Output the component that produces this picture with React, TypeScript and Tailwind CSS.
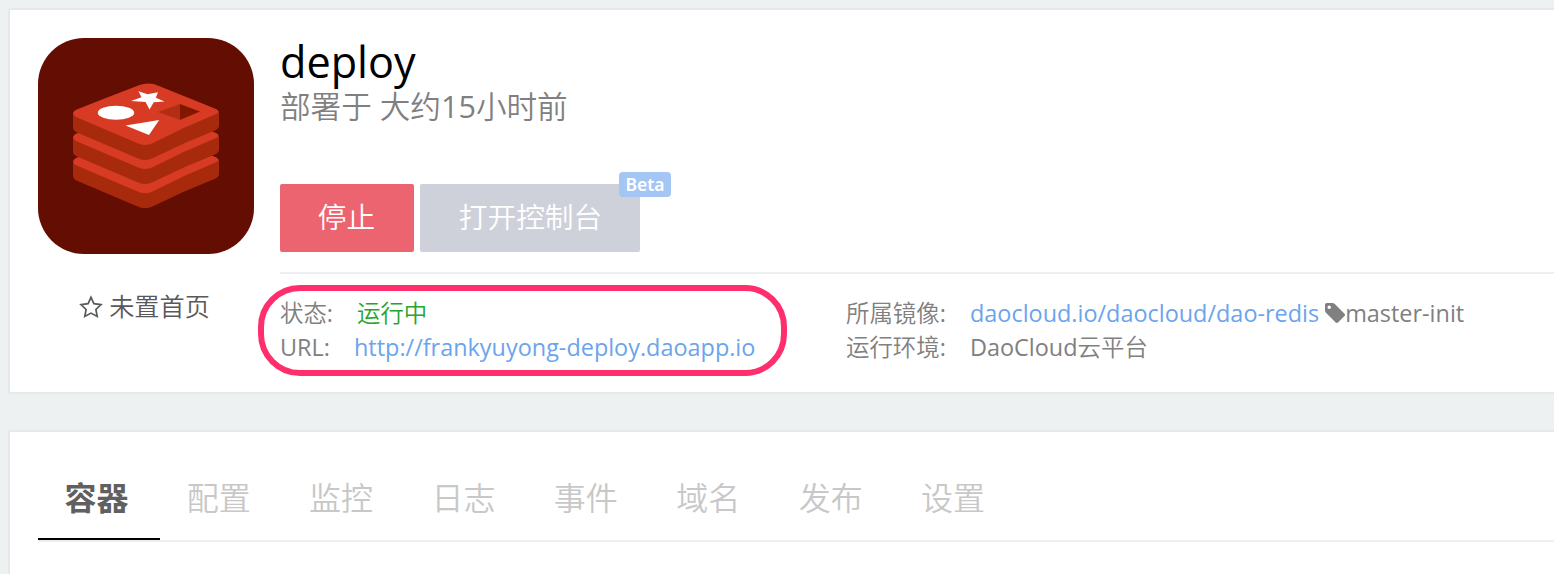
import React from 'react';

const TABS = ['容器', '配置', '监控', '日志', '事件', '域名', '发布', '设置'];

function RedisLogo() {
  return (
    <div className="h-[216px] w-[216px] shrink-0 overflow-hidden rounded-[46px] bg-[#640d02]">
      <svg viewBox="38 38 216 216" className="block h-full w-full">
        {[48.8, 24.6, 0.4].map((dy) => (
          <g key={dy} transform={`translate(0 ${dy})`}>
            <path
              fill="#a82a0d"
              d="M73 112V127Q73 130 77 132L137 157.500Q145 161.500 153 157.500Q184 142 215 130Q219 128 219 125V111Z"
            />
            <path
              fill="#d83b23"
              d="M75.500 109.500Q107 97 139 84.800Q149 81 159 85.500L216 108.500Q221 111 216 113.500Q184 126.500 153 142.500Q145 146.500 137 142.500L76 116.500Q70.500 113 75.500 109.500Z"
            />
          </g>
        ))}
        <ellipse cx="116" cy="112.800" rx="18.200" ry="7" fill="#fff" />
        <path
          fill="#fff"
          d="M138.500 91.200L147.600 94.200L158 92.200L155.800 97.800L164.500 101.500L153.800 102.300L149.500 109.500L145.600 102L131 100.900L141.500 97.300Z"
        />
        <path fill="#fff" d="M125.500 125.500L159.200 120L149 135Z" />
        <path fill="#b12e14" d="M158 112L180 104V120Z" />
        <path fill="#821700" d="M180 104L200 111.500L180 120Z" />
      </svg>
    </div>
  );
}

function StarOutline() {
  return (
    <svg viewBox="0 0 24 24" className="-mt-px -ml-px h-6 w-6 shrink-0" fill="none" stroke="#595959" strokeWidth="1.700">
      <path d="M12 2.400L14.900 8.700L22 9.600L16.900 14.500L18.200 21.500L12 18.100L5.800 21.500L7.100 14.500L2 9.600L9.100 8.700Z" />
    </svg>
  );
}

function Tag() {
  return (
    <svg viewBox="128 128 1515 1515" className="-mt-px ml-[6px] h-5 w-5 shrink-0" fill="#808080">
      <path d="M576 448q0-53-37.500-90.500t-90.500-37.500-90.500 37.500-37.500 90.500 37.500 90.500 90.500 37.500 90.500-37.500 37.500-90.500zm1067 576q0 53-37 90l-491 492q-39 37-91 37-53 0-90-37l-715-716q-38-37-64.500-101t-26.500-117v-416q0-52 38-90t90-38h416q53 0 117 26.500t102 64.500l715 714q37 39 37 91z" />
    </svg>
  );
}

function Latin({ children }: { children: React.ReactNode }) {
  return <span className="font-normal">{children}</span>;
}

export default function App() {
  return (
    <div className="flex h-[574px] w-full flex-col gap-9 overflow-hidden bg-[#edf1f2] pt-2 pl-2 font-['Open_Sans','Noto_Sans_CJK_SC',sans-serif] font-[350] whitespace-nowrap">
      <section className="relative flex h-[386px] shrink-0 gap-[26px] rounded-l-[3px] border-2 border-r-0 border-[#e6e8e8] bg-white pt-7 pl-7">
        <div className="flex w-[216px] shrink-0 flex-col items-center">
          <RedisLogo />
          <div className="mt-[33px] flex h-10 items-center gap-[6px] pr-[2px] text-[25.200px] text-[#595959]">
            <StarOutline />
            <span>未置首页</span>
          </div>
        </div>

        <div className="flex grow flex-col">
          <h1 className="h-[50px] text-[43.200px] leading-[47px] font-normal text-black">deploy</h1>
          <p className="h-10 text-[30.600px] leading-[36px] text-[#808080]">
            部署于 大约<Latin>15</Latin>小时前
          </p>
          <div className="mt-14 flex gap-[6px]">
            <button className="h-[68px] w-[134px] rounded-[2px] bg-[#ec6470] pr-px pb-[2px] text-[28.700px] text-white">停止</button>
            <button className="relative h-[68px] w-[220px] rounded-[2px] bg-[#ced1da] pb-[2px] pl-px text-[28.700px] text-white">
              打开控制台
              <span className="absolute -top-3 left-[199px] flex h-[25px] w-[52px] items-center justify-center rounded-[4px] bg-[#a3c6f5] font-['Noto_Sans',sans-serif] text-[17.500px] font-semibold">
                Beta
              </span>
            </button>
          </div>
          <div className="mt-5 flex h-[94px] border-t-2 border-[#efefef] pt-[22px] text-[23.430px] leading-[34px] text-[#808080]">
            <dl className="grid w-[566px] grid-cols-[74px_1fr] content-start">
              <dt>
                状态<Latin>:</Latin>
              </dt>
              <dd className="pl-[3px] text-[#25a52c]">运行中</dd>
              <dt className="font-normal">URL:</dt>
              <dd className="font-normal text-[#6ba4ee]">http://frankyuyong-deploy.daoapp.io</dd>
            </dl>
            <dl className="grid grid-cols-[124px_1fr] content-start">
              <dt>
                所属镜像<Latin>:</Latin>
              </dt>
              <dd className="flex items-center font-normal">
                <span className="text-[#6ba4ee]">daocloud.io/daocloud/dao-redis</span>
                <Tag />
                <span>master-init</span>
              </dd>
              <dt>
                运行环境<Latin>:</Latin>
              </dt>
              <dd>
                <Latin>DaoCloud</Latin>云平台
              </dd>
            </dl>
          </div>
        </div>
        <div className="absolute top-[275px] left-[248px] h-[91px] w-[529px] rounded-[42px] border-6 border-[#ff2f6e]" />
      </section>

      <section className="h-[200px] shrink-0 rounded-l-[3px] border-2 border-r-0 border-[#e6e8e8] bg-white pt-[28px] pl-7">
        <nav className="flex h-[82px] border-b-2 border-[#eeeef3] text-[32px] text-[#c8c8c8]">
          {TABS.map((tab, i) => (
            <a
              key={tab}
              className={
                i === 0
                  ? 'flex h-20 w-[122px] items-center justify-center border-b-2 border-black pr-[5px] pb-[2px] font-bold text-[#606060]'
                  : 'flex h-20 w-[122.400px] items-center justify-center pr-[5px] pb-[4px]'
              }
            >
              {tab}
            </a>
          ))}
        </nav>
      </section>
    </div>
  );
}
